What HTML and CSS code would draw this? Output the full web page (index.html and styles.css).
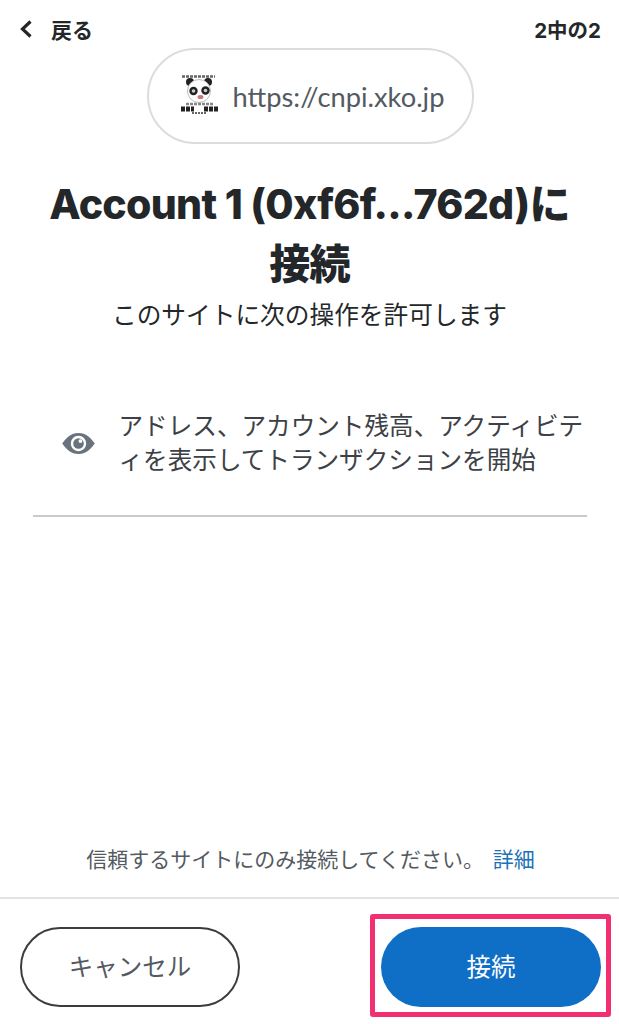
FILE: index.html
```html
<!DOCTYPE html>
<html lang="ja">
<head>
    <meta charset="utf-8">
    <title>接続</title>
    <link rel="stylesheet" href="styles.css">
</head>
<body>
    <div class="page">
        <div class="top-bar">
            <div class="back">
                <svg class="back-icon" width="14" height="18" viewBox="0 0 14 18"><path d="M11.500 1.500 L3.500 9 L11.500 16.500" fill="none" stroke="#24272a" stroke-width="3.200"/></svg>
                <span>戻る</span>
            </div>
            <div class="step">2中の2</div>
        </div>
        <div class="site-pill">
            <svg class="site-logo" width="40" height="46" viewBox="0 0 40 46">
                <path d="M2 3.500 H35" stroke="#666" stroke-width="2.500" stroke-dasharray="3 1"/>
                <circle cx="10" cy="9" r="4" fill="#222"/>
                <circle cx="28" cy="9" r="4" fill="#222"/>
                <circle cx="19" cy="18" r="11.500" fill="#fff" stroke="#bbb"/>
                <circle cx="13.500" cy="18" r="4.200" fill="#222"/>
                <circle cx="25.500" cy="17.500" r="4.200" fill="#222"/>
                <circle cx="13.500" cy="18" r="1.800" fill="#ccc"/>
                <circle cx="25.500" cy="17.500" r="1.800" fill="#ccc"/>
                <ellipse cx="20.500" cy="24" rx="3" ry="2" fill="#c77"/>
                <path d="M6 31 H33" stroke="#888" stroke-width="2.500" stroke-dasharray="3 1"/>
                <path d="M1 36 H14 M24 36 H38" stroke="#222" stroke-width="5" stroke-dasharray="4 1"/>
                <path d="M12 40 H27" stroke="#666" stroke-width="2" stroke-dasharray="2 1"/>
            </svg>
            <span class="site-url">https://cnpi.xko.jp</span>
        </div>
        <h1 class="title">Account 1 (0xf6f...762d)に<br>接続</h1>
        <p class="subtitle">このサイトに次の操作を許可します</p>
        <div class="permission">
            <svg class="eye-icon" width="33" height="23" viewBox="0 0 34 24">
                <path fill-rule="evenodd" fill="#6a737d" d="M17 1 C26 1 31 8 34 12 C31 16 26 23 17 23 C8 23 3 16 0 12 C3 8 8 1 17 1 Z M17 4 C12.600 4 9 7.600 9 12 C9 16.400 12.600 20 17 20 C21.400 20 25 16.400 25 12 C25 7.600 21.400 4 17 4 Z"/>
                <circle cx="17" cy="12" r="5.500" fill="#6a737d"/>
                <circle cx="19" cy="9.500" r="2" fill="#fff"/>
            </svg>
            <p class="permission-text">アドレス、アカウント残高、アクティビティを表示してトランザクションを開始</p>
        </div>
        <div class="spacer"></div>
        <p class="trust-note">信頼するサイトにのみ接続してください。 <a class="more-link" href="#">詳細</a></p>
        <div class="footer">
            <button class="btn btn-cancel">キャンセル</button>
            <div class="highlight">
                <button class="btn btn-connect">接続</button>
            </div>
        </div>
    </div>
</body>
</html>
```
FILE: styles.css
```css
* {
    box-sizing: border-box;
}
body {
    margin: 0;
    background: #fff;
    color: #24272a;
    font-family: Inter, "Noto Sans CJK JP", sans-serif;
}
.page {
    height: 1024px;
    display: flex;
    flex-direction: column;
    overflow: hidden;
}
.top-bar {
    height: 48px;
    padding: 10px 18px 0 19px;
    display: flex;
    justify-content: space-between;
    align-items: center;
    font-size: 20.500px;
    font-weight: 700;
}
.back {
    display: flex;
    align-items: center;
    gap: 18px;
}
.back-icon {
    display: block;
}
.back span {
    font-size: 21px;
    font-weight: 700;
}
.site-pill {
    align-self: center;
    width: 327px;
    height: 96px;
    margin-left: 1px;
    border: 2px solid #dadce0;
    border-radius: 48px;
    display: flex;
    align-items: center;
    gap: 13px;
    padding-left: 31px;
}
.site-logo {
    filter: blur(0.5px);
}
.site-url {
    font-size: 27.300px;
    color: #535a61;
    font-family: Lato, sans-serif;
}
.title {
    margin: 30px 0 0;
    font-size: 41px;
    line-height: 60px;
    font-weight: 800;
    text-align: center;
    letter-spacing: -0.700px;
}
.subtitle {
    margin: 1px 0 0;
    font-size: 24.700px;
    line-height: 40px;
    text-align: center;
}
.permission {
    margin: 74px 32px 0 33px;
    padding: 0 0 38px 29px;
    border-bottom: 2px solid #c8cbcd;
    display: flex;
    align-items: center;
    gap: 23.500px;
}
.eye-icon {
    flex-shrink: 0;
}
.permission-text {
    margin: 0;
    font-size: 24.600px;
    line-height: 34px;
    color: #3d4146;
    line-break: loose;
}
.spacer {
    flex: 1;
}
.trust-note {
    margin: 0 0 20px;
    text-align: center;
    font-size: 21px;
    line-height: 34px;
    color: #535a61;
    padding-left: 2px;
}
.more-link {
    color: #1d71b8;
    text-decoration: none;
    margin-left: 3px;
}
.footer {
    height: 127px;
    border-top: 2px solid #e2e3e5;
    padding: 15px 8px 0 20px;
    display: flex;
    justify-content: space-between;
    align-items: flex-start;
}
.btn {
    width: 220px;
    height: 80px;
    border-radius: 40px;
    padding-bottom: 4px;
    font-family: inherit;
    font-size: 24.500px;
}
.btn-cancel {
    margin-top: 13px;
    background: #fff;
    border: 2px solid #3a3d40;
    color: #535a61;
}
.highlight {
    width: 241px;
    height: 103px;
    border: 5px solid #f3306f;
    border-radius: 3px;
    padding: 8px 0 0 6px;
}
.btn-connect {
    display: block;
    background: #0f6fc6;
    border: none;
    color: #fff;
}
```
